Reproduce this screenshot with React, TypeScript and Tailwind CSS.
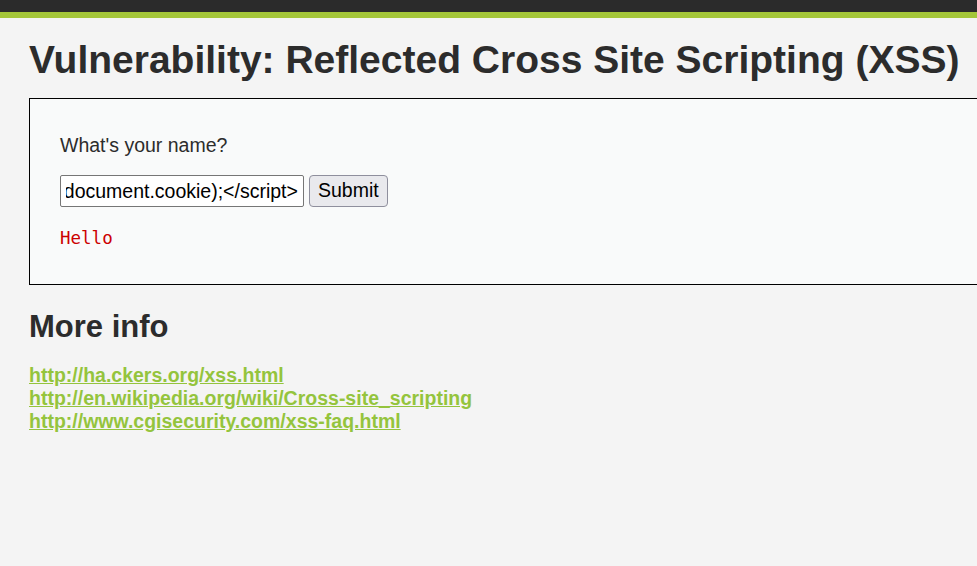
import React, { useEffect, useRef } from 'react';

const links = [
  'http://ha.ckers.org/xss.html',
  'http://en.wikipedia.org/wiki/Cross-site_scripting',
  'http://www.cgisecurity.com/xss-faq.html',
];

const App = () => {
  const inputRef = useRef<HTMLInputElement>(null);

  // the payload is longer than the field, the browser shows its tail
  useEffect(() => {
    if (inputRef.current) inputRef.current.scrollLeft = inputRef.current.scrollWidth;
  }, []);

  return (
    <div className="min-h-[566px] bg-[#f4f4f4] text-[#2c2c2c] font-['Liberation_Sans',Arial,sans-serif] overflow-hidden">
      <div className="h-[12px] bg-[#2b2b2b]" />
      <div className="h-[6px] bg-[#a4c639]" />
      <div className="pl-[29px]">
        <h1 className="mt-[20px] text-[39px] font-bold leading-[44px] whitespace-nowrap">
          Vulnerability: Reflected Cross Site Scripting (XSS)
        </h1>
        <div className="mt-[16px] w-[1000px] h-[187px] border border-black bg-[#f9fafa] pl-[30px] pt-[34px]">
          <p className="text-[19.5px] leading-[24px]">What's your name?</p>
          <form className="mt-[18px] flex items-center gap-[5px]" onSubmit={(e) => e.preventDefault()}>
            <input
              ref={inputRef}
              type="text"
              name="name"
              defaultValue="<script>alert(document.cookie);</script>"
              className="w-[244px] h-[32px] border border-[#767676] rounded-[2px] bg-white px-[5px] text-[19.5px] text-black outline-none"
            />
            <button className="h-[32px] px-[8px] border border-[#8f8f9d] rounded-[4px] bg-[#e9e9ed] text-[19.5px] text-black">
              Submit
            </button>
          </form>
          <pre className="mt-[20px] text-[17.5px] leading-[22px] text-[#cc0000] font-['DejaVu_Sans_Mono',monospace]">Hello</pre>
        </div>
        <h2 className="mt-[24px] text-[31px] font-bold leading-[36px]">More info</h2>
        <ul className="mt-[19px]">
          {links.map((l) => (
            <li key={l} className="text-[19.5px] leading-[23px]">
              <a href={l} className="font-bold text-[#94c43d] underline">
                {l}
              </a>
            </li>
          ))}
        </ul>
      </div>
    </div>
  );
};

export default App;
